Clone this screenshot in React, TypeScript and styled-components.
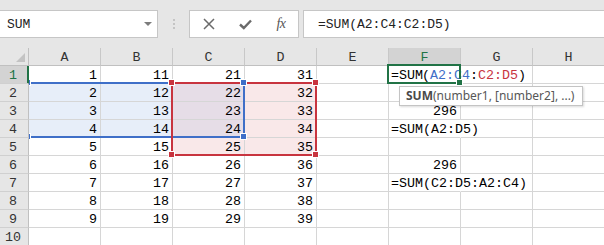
import React from "react";
import styled, { createGlobalStyle, css } from "styled-components";

const GREEN = "#217346";
const BLUE = "#3f6fc8";
const RED = "#c8343f";
const MONO = `"Liberation Mono", "DejaVu Sans Mono", monospace`;

const Global = createGlobalStyle`
  html, body { margin: 0; padding: 0; background: #ffffff; }
  body { width: 604px; height: 245px; overflow: hidden; }
  * { box-sizing: border-box; }
`;

const Page = styled.div`
  width: 604px;
  height: 245px;
  overflow: hidden;
  display: flex;
  flex-direction: column;
`;

const Toolbar = styled.div`
  height: 48px;
  flex: none;
  background: #e6e6e6;
  display: flex;
  align-items: flex-start;
  padding-top: 10px;
`;

const NameBox = styled.div`
  width: 158px;
  height: 28px;
  background: #fff;
  border: 1px solid #c6c6c6;
  border-left: none;
  display: flex;
  align-items: center;
  justify-content: space-between;
  padding: 0 5px 0 7px;
  font: 13px ${MONO};
  color: #222;
`;

const Caret = styled.span`
  width: 0;
  height: 0;
  border-left: 4px solid transparent;
  border-right: 4px solid transparent;
  border-top: 4px solid #7c7c7c;
  margin-top: -1px;
`;

const Grip = styled.div`
  width: 31px;
  height: 28px;
  display: flex;
  flex-direction: column;
  align-items: center;
  justify-content: center;
  gap: 2px;
`;

const Dot = styled.span`
  width: 2px;
  height: 2px;
  background: #c4c4c4;
`;

const ButtonGroup = styled.div`
  width: 110px;
  height: 28px;
  background: #fff;
  border: 1px solid #c6c6c6;
  display: flex;
  align-items: center;
  justify-content: space-between;
  padding: 0 10px 0 12px;
`;

const IconButton = styled.span`
  width: 14px;
  height: 14px;
  display: flex;
  align-items: center;
  justify-content: center;
  color: #6a6a6a;
`;

const Fx = styled.span`
  font: italic 14px "Liberation Serif", serif;
  color: #555;
  letter-spacing: -0.5px;
`;

const FormulaInput = styled.div`
  flex: 1;
  margin-left: 4px;
  height: 28px;
  background: #fff;
  border: 1px solid #c6c6c6;
  border-right: none;
  display: flex;
  align-items: center;
  padding-left: 14px;
  font: 13px ${MONO};
  color: #222;
`;

const Sheet = styled.div`
  position: relative;
  flex: 1;
  display: grid;
  grid-template-columns: 29px repeat(8, 72px);
  grid-auto-rows: 18px;
  overflow: hidden;
  font: 13.33px ${MONO};
`;

const Corner = styled.div`
  background: #e6e6e6;
  border-right: 1px solid #c0c0c0;
  border-bottom: 1px solid #c0c0c0;
  display: flex;
  align-items: flex-end;
  justify-content: flex-end;
  padding: 0 3px 3px 0;
`;

const Tri = styled.span`
  width: 0;
  height: 0;
  border-left: 9px solid transparent;
  border-bottom: 9px solid #c3c3c3;
`;

const ColHeader = styled.div<{ $active?: boolean }>`
  background: ${(p) => (p.$active ? "#d3d3d3" : "#e6e6e6")};
  color: ${(p) => (p.$active ? GREEN : "#333")};
  border-right: 1px solid #c8c8c8;
  border-bottom: 1px solid ${(p) => (p.$active ? GREEN : "#c0c0c0")};
  ${(p) => p.$active && css`box-shadow: inset 0 -1px 0 ${GREEN};`}
  display: flex;
  align-items: center;
  justify-content: center;
  padding-top: 1px;
`;

const RowHeader = styled.div<{ $active?: boolean }>`
  background: ${(p) => (p.$active ? "#d3d3d3" : "#e6e6e6")};
  color: ${(p) => (p.$active ? GREEN : "#333")};
  border-right: 1px solid ${(p) => (p.$active ? GREEN : "#c0c0c0")};
  ${(p) => p.$active && css`box-shadow: inset -1px 0 0 ${GREEN};`}
  border-bottom: 1px solid #d0d0d0;
  display: flex;
  align-items: center;
  justify-content: center;
  padding: 1px 2px 0 0;
`;

type Fill = "blue" | "mauve" | "pink" | undefined;
const FILLS: Record<string, string> = {
  blue: "#e7eef9",
  mauve: "#e6dde7",
  pink: "#f9e8e9",
};

const Cell = styled.div<{ $fill?: Fill; $align?: "left" | "right"; $spill?: boolean }>`
  background: ${(p) => (p.$fill ? FILLS[p.$fill] : "transparent")};
  border-right: 1px solid ${(p) => (p.$spill ? "transparent" : "#d6d6d6")};
  border-bottom: 1px solid #d6d6d6;
  display: flex;
  align-items: center;
  justify-content: ${(p) => (p.$align === "left" ? "flex-start" : "flex-end")};
  padding: 1px 3px 0 2px;
  white-space: nowrap;
  color: #000;
  ${(p) =>
    p.$spill &&
    css`
      position: relative;
      z-index: 1;
      overflow: visible;
    `}
`;

const RefBlue = styled.span`
  color: ${BLUE};
`;
const RefRed = styled.span`
  color: ${RED};
`;
const TextCaret = styled.span`
  display: inline-block;
  width: 1px;
  height: 15px;
  background: #000;
  vertical-align: middle;
  margin: -2px -1px 0 0;
`;

/* overlays */
const ClipLayer = styled.div`
  position: absolute;
  left: 29px;
  top: 18px;
  right: 0;
  bottom: 0;
  overflow: hidden;
  pointer-events: none;
`;

const RangeBox = styled.div<{ $color: string }>`
  position: absolute;
  border: 2px solid ${(p) => p.$color};
`;

const Handle = styled.div<{ $color: string }>`
  position: absolute;
  width: 7px;
  height: 7px;
  background: ${(p) => p.$color};
  border: 1px solid #fff;
`;

const Selection = styled.div`
  position: absolute;
  border: 2px solid ${GREEN};
  pointer-events: none;
  z-index: 3;
`;

const Tooltip = styled.div`
  position: absolute;
  z-index: 4;
  left: 399px;
  top: 38px;
  width: 184px;
  height: 20px;
  background: #fff;
  border: 1px solid #c4c4c4;
  box-shadow: 1px 1px 2px rgba(0, 0, 0, 0.15);
  display: flex;
  align-items: center;
  padding-left: 6px;
  font: 12px "Noto Sans", "Open Sans", sans-serif;
  line-height: 16px;
  color: #575757;
  white-space: nowrap;
`;

const Bold = styled.b`
  color: #4a4a4a;
  font-weight: 700;
`;

const COLS = ["A", "B", "C", "D", "E", "F", "G", "H"];
const colX = (i: number) => 28 + 72 * i; // left gridline of column i
const rowY = (r: number) => 17 + 18 * (r - 1); // top gridline of row r

type Range = { c1: number; r1: number; c2: number; r2: number; color: string; handles: [number, number][] };

const RANGES: Range[] = [
  { c1: 0, r1: 2, c2: 2, r2: 4, color: BLUE, handles: [[0, 2], [3, 2], [0, 5], [3, 5]] },
  { c1: 2, r1: 2, c2: 3, r2: 5, color: RED, handles: [[2, 2], [4, 2], [2, 6], [4, 6]] },
];

function fillFor(r: number, c: number): Fill {
  if (r >= 2 && r <= 4 && c <= 1) return "blue";
  if (r >= 2 && r <= 4 && c === 2) return "mauve";
  if ((c === 3 && r >= 2 && r <= 5) || (c === 2 && r === 5)) return "pink";
  return undefined;
}

function fCell(r: number): { content: React.ReactNode; align: "left" | "right"; spill: boolean } | null {
  switch (r) {
    case 1:
      return {
        align: "left",
        spill: true,
        content: (
          <>
            =SUM<TextCaret />(<RefBlue>A2:C4</RefBlue>:<RefRed>C2:D5</RefRed>)
          </>
        ),
      };
    case 3:
      return { align: "right", spill: false, content: "296" };
    case 4:
      return { align: "left", spill: true, content: "=SUM(A2:D5)" };
    case 6:
      return { align: "right", spill: false, content: "296" };
    case 7:
      return { align: "left", spill: true, content: "=SUM(C2:D5:A2:C4)" };
    default:
      return null;
  }
}

export default function App() {
  const rows = Array.from({ length: 10 }, (_, i) => i + 1);
  const OX = 29;
  const OY = 18;
  return (
    <Page>
      <Global />
      <Toolbar>
        <NameBox>
          <span>SUM</span>
          <Caret />
        </NameBox>
        <Grip>
          <Dot />
          <Dot />
          <Dot />
        </Grip>
        <ButtonGroup>
          <IconButton>
            <svg width="12" height="12" viewBox="0 0 12 12">
              <path d="M1 1 L11 11 M11 1 L1 11" stroke="currentColor" strokeWidth="1.5" fill="none" />
            </svg>
          </IconButton>
          <IconButton>
            <svg width="13" height="11" viewBox="0 0 13 11">
              <path d="M1 5.5 L4.8 9 L12 1.5" stroke="currentColor" strokeWidth="2.4" fill="none" />
            </svg>
          </IconButton>
          <IconButton>
            <Fx>fx</Fx>
          </IconButton>
        </ButtonGroup>
        <FormulaInput>=SUM(A2:C4:C2:D5)</FormulaInput>
      </Toolbar>
      <Sheet>
        <Corner>
          <Tri />
        </Corner>
        {COLS.map((c, i) => (
          <ColHeader key={c} $active={i === 5}>
            {c}
          </ColHeader>
        ))}
        {rows.map((r) => (
          <React.Fragment key={r}>
            <RowHeader $active={r === 1}>{r}</RowHeader>
            {COLS.map((_, c) => {
              if (c === 5) {
                const f = fCell(r);
                return (
                  <Cell key={c} $align={f?.align} $spill={f?.spill}>
                    {f?.content}
                  </Cell>
                );
              }
              const v = r <= 9 && c <= 3 ? String(c * 10 + r) : "";
              return (
                <Cell key={c} $fill={fillFor(r, c)}>
                  {v}
                </Cell>
              );
            })}
          </React.Fragment>
        ))}
        <ClipLayer>
          {RANGES.map((g, gi) => (
            <RangeBox
              key={"b" + gi}
              $color={g.color}
              style={{
                left: colX(g.c1) - 1 - OX,
                top: rowY(g.r1) - 1 - OY,
                width: colX(g.c2 + 1) - colX(g.c1) + 2,
                height: rowY(g.r2 + 1) - rowY(g.r1) + 2,
              }}
            />
          ))}
          {RANGES.map((g, gi) =>
            g.handles.map(([c, r], hi) => (
              <Handle
                key={"h" + gi + "-" + hi}
                $color={g.color}
                style={{ left: colX(c) - 4 - OX, top: rowY(r) - 4 - OY }}
              />
            ))
          )}
        </ClipLayer>
        <Selection style={{ left: colX(5) - 1, top: rowY(1) - 1, width: 74, height: 20 }} />
        <Handle $color={GREEN} style={{ left: colX(6) - 4, top: rowY(2) - 4, zIndex: 3 }} />
        <Tooltip>
          <Bold>SUM</Bold>(number1, [number2], ...)
        </Tooltip>
      </Sheet>
    </Page>
  );
}
